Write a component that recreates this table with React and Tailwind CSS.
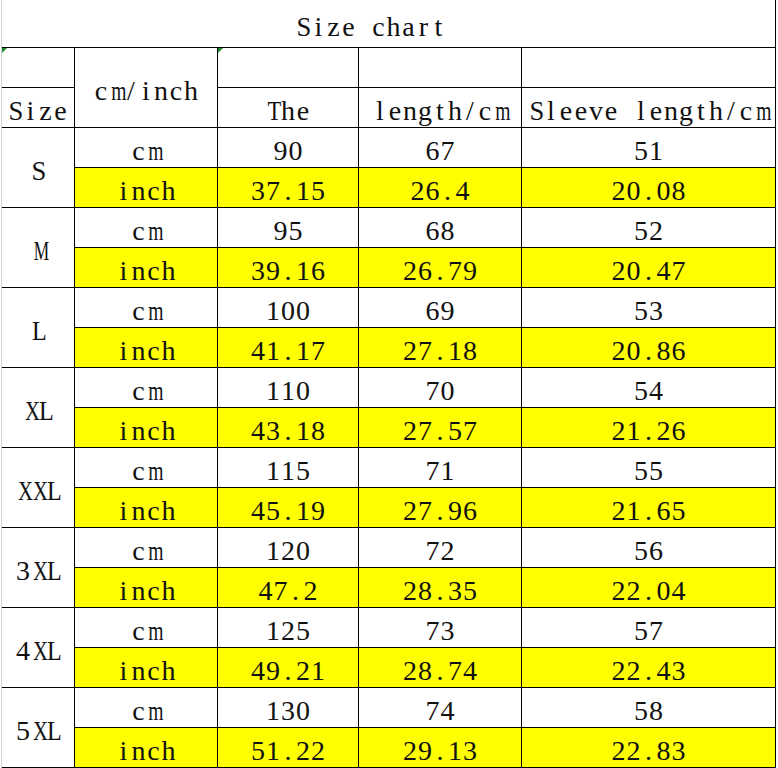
const rows = [
  ['S', ['90', '67', '51'], ['37.15', '26.4', '20.08']],
  ['M', ['95', '68', '52'], ['39.16', '26.79', '20.47']],
  ['L', ['100', '69', '53'], ['41.17', '27.18', '20.86']],
  ['XL', ['110', '70', '54'], ['43.18', '27.57', '21.26']],
  ['XXL', ['115', '71', '55'], ['45.19', '27.96', '21.65']],
  ['3XL', ['120', '72', '56'], ['47.2', '28.35', '22.04']],
  ['4XL', ['125', '73', '57'], ['49.21', '28.74', '22.43']],
  ['5XL', ['130', '74', '58'], ['51.22', '29.13', '22.83']],
]

const cell = 'flex items-center justify-center pt-[7px] border-r border-b border-black'

// wide serif letters get squeezed into the half-width cell
const squeeze = {
  M: 'scale-x-[0.62]',
  X: 'scale-x-[0.74]',
  L: 'scale-x-[0.86]',
  T: 'scale-x-[0.8]',
  S: 'scale-x-[0.95]',
  m: 'scale-x-[0.7]',
}

// serif glyphs on a fixed half-width grid, like the spreadsheet's CJK font
function Mono({ text }) {
  return (
    <span className="whitespace-pre">
      {text.split('').map((ch, i) => (
        <span key={i} className={`inline-block w-[15px] text-center ${squeeze[ch] || ''}`}>
          {ch}
        </span>
      ))}
    </span>
  )
}

function Marker() {
  return (
    <span className="absolute left-0 top-0 h-0 w-0 border-t-[5px] border-r-[5px] border-t-[#1e8a2e] border-r-transparent" />
  )
}

export default function App() {
  return (
    <div className="h-[768px] w-[778px] overflow-hidden bg-white font-['Liberation_Serif',serif] text-[28px] leading-none text-[#111]">
      <div className="ml-px w-[775px] border-l border-[#d4d4d4]">
        <div className="flex h-[47px] items-center border-r border-black pl-[294px] pt-[7px]">
          <Mono text="Size chart" />
        </div>
        <div className="grid grid-cols-[73px_143px_141px_163px_254px] grid-rows-[repeat(18,40px)] border-t border-black">
          <div className={`${cell} relative`}>
            <Marker />
          </div>
          <div className={`${cell} row-span-2`}>
            <Mono text="cm/inch" />
          </div>
          <div className={`${cell} relative`}>
            <Marker />
          </div>
          <div className={cell} />
          <div className={cell} />

          <div className={cell}>
            <Mono text="Size" />
          </div>
          <div className={cell}>
            <Mono text="The" />
          </div>
          <div className={cell}>
            <Mono text="length/cm" />
          </div>
          <div className={cell}>
            <Mono text="Sleeve length/cm" />
          </div>

          {rows.map(([size, cm, inch]) => (
            <div key={size} className="contents">
              <div className={`${cell} row-span-2`}>
                <Mono text={size} />
              </div>
              <div className={cell}>
                <Mono text="cm" />
              </div>
              {cm.map((v, i) => (
                <div key={'c' + i} className={cell}>
                  <Mono text={v} />
                </div>
              ))}
              <div className={`${cell} bg-[#ffff00]`}>
                <Mono text="inch" />
              </div>
              {inch.map((v, i) => (
                <div key={'i' + i} className={`${cell} bg-[#ffff00]`}>
                  <Mono text={v} />
                </div>
              ))}
            </div>
          ))}
        </div>
      </div>
    </div>
  )
}
